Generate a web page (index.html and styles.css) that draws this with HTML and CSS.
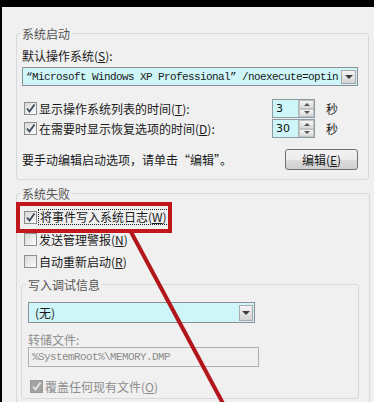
FILE: index.html
```html
<!DOCTYPE html>
<html lang="zh-CN">
<head>
  <meta charset="UTF-8">
  <title>启动和故障恢复</title>
  <link rel="stylesheet" href="styles.css">
</head>
<body>
  <div class="dialog">
    <fieldset class="group">
      <legend>系统启动</legend>
      <div class="label-line">默认操作系统(<u>S</u>):</div>
      <div class="combo wide">
        <span class="combo-text mono">“Microsoft Windows XP Professional” /noexecute=optin</span>
        <span class="drop"></span>
      </div>

      <div class="check-row first">
        <span class="check on"><svg viewBox="0 0 11 11"><path d="M2 5.5 L4.5 8.5 L9.5 1.5"/></svg></span>
        <span class="check-label">显示操作系统列表的时间(<u>T</u>):</span>
        <span class="spin">
          <span class="spin-value">3</span>
          <span class="spin-btns"><span class="up"></span><span class="down"></span></span>
        </span>
        <span class="unit">秒</span>
      </div>
      <div class="check-row">
        <span class="check on"><svg viewBox="0 0 11 11"><path d="M2 5.5 L4.5 8.5 L9.5 1.5"/></svg></span>
        <span class="check-label">在需要时显示恢复选项的时间(<u>D</u>):</span>
        <span class="spin">
          <span class="spin-value">30</span>
          <span class="spin-btns"><span class="up"></span><span class="down"></span></span>
        </span>
        <span class="unit">秒</span>
      </div>

      <div class="edit-row">
        <span>要手动编辑启动选项，请单击“编辑”。</span>
        <button class="btn">编辑(<u>E</u>)</button>
      </div>
    </fieldset>

    <fieldset class="group failure">
      <legend>系统失败</legend>
      <div class="check-row tall first">
        <span class="check on"><svg viewBox="0 0 11 11"><path d="M2 5.5 L4.5 8.5 L9.5 1.5"/></svg></span>
        <span class="check-label focus">将事件写入系统日志(<u>W</u>)</span>
      </div>
      <div class="check-row tall">
        <span class="check"></span>
        <span class="check-label">发送管理警报(<u>N</u>)</span>
      </div>
      <div class="check-row tall">
        <span class="check"></span>
        <span class="check-label">自动重新启动(<u>R</u>)</span>
      </div>

      <fieldset class="group inner">
        <legend>写入调试信息</legend>
        <div class="combo small">
          <span class="combo-text">(无)</span>
          <span class="drop"></span>
        </div>
        <div class="label-line disabled">转储文件:</div>
        <div class="textbox mono">%SystemRoot%\MEMORY.DMP</div>
        <div class="check-row last">
          <span class="check on off"><svg viewBox="0 0 11 11"><path d="M2 5.5 L4.5 8.5 L9.5 1.5"/></svg></span>
          <span class="check-label disabled">覆盖任何现有文件(<u>O</u>)</span>
        </div>
      </fieldset>
    </fieldset>
  </div>

  <!-- red annotation drawn over the dialog -->
  <svg class="annotation" width="374" height="402" viewBox="0 0 374 402">
    <rect x="18" y="204" width="152" height="27" />
    <line x1="131" y1="232" x2="240" y2="435" />
  </svg>
</body>
</html>
```

FILE: styles.css
```css
body {
  margin: 0;
  height: 402px;
  position: relative;
  overflow: hidden;
  background-color: #000;
  font-family: "Noto Sans CJK SC", "Liberation Sans", sans-serif;
  font-size: 12px;
  color: #1a1a1a;
}

.dialog {
  margin: 7px 0 0 2px;
  height: 395px;
  box-sizing: border-box;
  padding: 19px 5px 0 14px;
  background-color: #f0f0f0;
  overflow: hidden;
}

.mono {
  font-family: "Liberation Mono", monospace;
  font-size: 11px;
  letter-spacing: -0.6px;
}

u {
  text-decoration: underline;
}

/* group boxes */
.group {
  margin: 0;
  padding: 0 10px 9px 5px;
  border: 1px solid #d5d9dc;
  border-radius: 3px;
}

.group legend {
  margin-left: -2px;
  padding: 0 2px;
  line-height: 15px;
  color: #555;
}

.failure {
  margin-top: 6px;
  padding-bottom: 40px;
}

.inner {
  margin: 5px 0 0 -1px;
  width: 338px;
  box-sizing: border-box;
  padding: 0 4px 2px 6px;
}

.label-line {
  margin-top: 7px;
  line-height: 15px;
}

.label-line.disabled {
  margin-top: 10px;
  line-height: 14px;
}

.disabled {
  color: #8d8d8d;
}

/* combo boxes */
.combo {
  display: flex;
  align-items: center;
  box-sizing: border-box;
  border: 1px solid #8c8f94;
  background-color: #cef6f9;
  padding: 0 1px 0 3px;
}

.combo.wide {
  margin-top: 4px;
  height: 19px;
  width: 336px;
}

.combo.small {
  margin-top: 10px;
  height: 21px;
  width: 227px;
  padding-left: 6px;
}

.combo-text {
  flex: 1;
  white-space: nowrap;
  overflow: hidden;
}

.drop {
  width: 15px;
  height: 14px;
  box-sizing: border-box;
  border: 1px solid #a9a9a9;
  background: linear-gradient(#f4f4f4, #d4d4d4);
  display: flex;
  align-items: center;
  justify-content: center;
}

.drop::after {
  content: "";
  border-left: 4px solid transparent;
  border-right: 4px solid transparent;
  border-top: 4px solid #3c3c3c;
}

.combo.small .drop {
  height: 16px;
  width: 14px;
}

/* checkbox rows */
.check-row {
  display: flex;
  align-items: center;
  height: 19px;
  padding-left: 2px;
}

.check-row.first {
  margin-top: 13px;
}

.check-row + .check-row {
  margin-top: 1px;
}

.check-row.tall {
  height: 22px;
}

.check-row.tall.first {
  margin-top: 5px;
}

.check-row.tall + .check-row.tall {
  margin-top: 0;
}

.check-row.last {
  margin-top: 9px;
  height: 20px;
}

.check {
  width: 13px;
  height: 13px;
  box-sizing: border-box;
  border: 1px solid #8e8f8f;
  background: linear-gradient(135deg, #d8d8d8, #fbfbfb);
  margin-right: 2px;
  flex-shrink: 0;
}

.check svg {
  display: block;
  width: 11px;
  height: 11px;
}

.check path {
  fill: none;
  stroke: #3d4a5c;
  stroke-width: 1.8;
}

.check.off {
  background: #a3a3a3;
  border-color: #9a9a9a;
}

.check.off path {
  stroke: #e8e8e8;
}

.check-label {
  flex: 1;
  white-space: nowrap;
}

.check-label.focus {
  flex: none;
  outline: 1px dotted #222;
  outline-offset: 0;
  padding: 0 1px;
  line-height: 14px;
}

/* spin boxes */
.spin {
  display: flex;
  width: 43px;
  height: 19px;
  box-sizing: border-box;
  border: 1px solid #8c9aa4;
  background-color: #cef6f9;
}

.spin-value {
  flex: 1;
  padding-left: 3px;
  font-family: "DejaVu Sans", sans-serif;
  font-size: 11px;
  line-height: 17px;
  color: #111;
}

.spin-btns {
  width: 15px;
  display: flex;
  flex-direction: column;
  border-left: 1px solid #b5b5b5;
  background-color: #e6e6e6;
}

.spin-btns span {
  flex: 1;
  display: flex;
  align-items: center;
  justify-content: center;
  border: 1px solid #c2c2c2;
  background: linear-gradient(#f6f6f6, #d8d8d8);
}

.spin-btns .up::after {
  content: "";
  border-left: 3px solid transparent;
  border-right: 3px solid transparent;
  border-bottom: 3px solid #555;
}

.spin-btns .down::after {
  content: "";
  border-left: 3px solid transparent;
  border-right: 3px solid transparent;
  border-top: 3px solid #555;
}

.unit {
  width: 43px;
  box-sizing: border-box;
  padding-left: 11px;
}

/* edit row */
.edit-row {
  margin-top: 11px;
  height: 21px;
  display: flex;
  justify-content: space-between;
  align-items: center;
}

.btn {
  width: 73px;
  height: 21px;
  padding: 0;
  border: 1px solid #707070;
  border-radius: 3px;
  background: linear-gradient(#f2f2f2 0%, #ebebeb 50%, #dddddd 51%, #cfcfcf 100%);
  font-family: inherit;
  font-size: 12px;
  color: #1a1a1a;
}

/* dump file box */
.textbox {
  width: 231px;
  height: 20px;
  box-sizing: border-box;
  border: 1px solid #afafaf;
  padding-left: 3px;
  line-height: 18px;
  color: #8d8d8d;
  background-color: #f0f0f0;
}

/* annotation overlay */
.annotation {
  position: absolute;
  top: 0;
  left: 0;
  pointer-events: none;
}

.annotation rect {
  fill: none;
  stroke: #c0161c;
  stroke-width: 4;
}

.annotation line {
  stroke: #b3161a;
  stroke-width: 4;
}
```
